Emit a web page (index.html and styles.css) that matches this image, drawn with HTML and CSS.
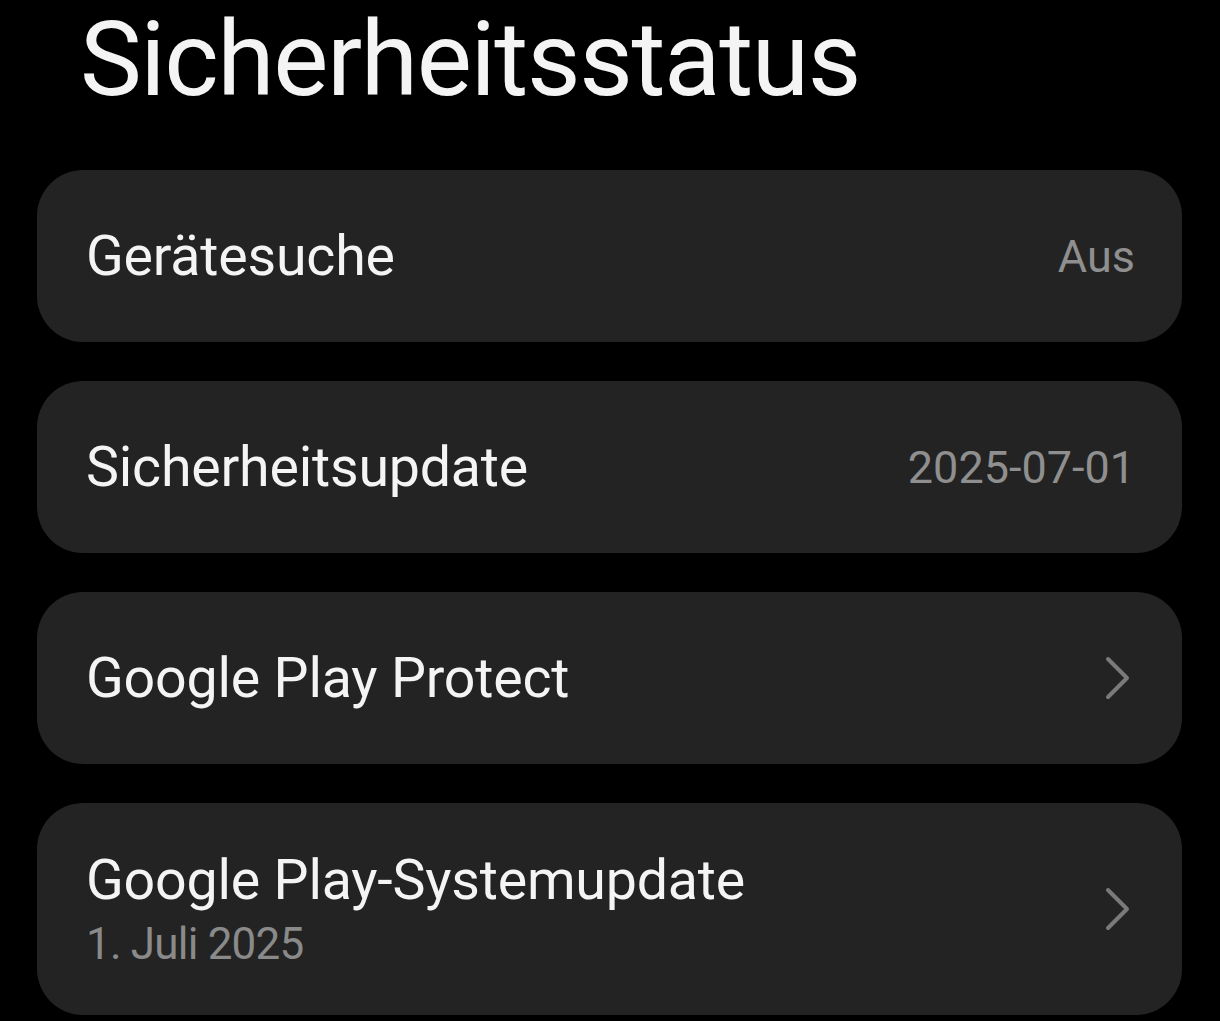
FILE: index.html
```html
<!DOCTYPE html>
<html lang="de">
<head>
  <meta charset="UTF-8">
  <title>Sicherheitsstatus</title>
  <link rel="stylesheet" href="styles.css">
</head>
<body>

  <h1 class="title">Sicherheitsstatus</h1>

  <div class="list">
    <div class="card">
      <span class="label">Gerätesuche</span>
      <span class="value">Aus</span>
    </div>

    <div class="card">
      <span class="label">Sicherheitsupdate</span>
      <span class="value">2025-07-01</span>
    </div>

    <div class="card">
      <span class="label">Google Play Protect</span>
      <svg class="chevron" viewBox="0 0 26 44" width="26" height="44">
        <polyline points="3,3 22,22 3,41" />
      </svg>
    </div>

    <div class="card card-tall">
      <div class="texts">
        <span class="label">Google Play-Systemupdate</span>
        <span class="sub">1. Juli 2025</span>
      </div>
      <svg class="chevron" viewBox="0 0 26 44" width="26" height="44">
        <polyline points="3,3 22,22 3,41" />
      </svg>
    </div>
  </div>

</body>
</html>
```

FILE: styles.css
```css
body {
  margin: 0;
  background: #000;
  font-family: Roboto, "Noto Sans", sans-serif;
  color: #f2f2f2;
  overflow: hidden;
}

.title {
  margin: 0;
  padding: 4px 0 0 80px;
  height: 166px;
  font-size: 104px;
  font-weight: 400;
  letter-spacing: -1.4px;
  line-height: 112px;
  color: #f4f4f4;
}

.list {
  display: flex;
  flex-direction: column;
  gap: 39px;
  margin: 0 38px 0 37px;
}

.card {
  display: flex;
  align-items: center;
  justify-content: space-between;
  height: 172px;
  padding: 0 47px 0 49px;
  background: #232323;
  border-radius: 46px;
}

.card-tall {
  height: 212px;
}

.label {
  font-size: 55.5px;
  letter-spacing: -0.2px;
  color: #f4f4f4;
}

.value {
  font-size: 45px;
  color: #8f8f8f;
}

.texts {
  display: flex;
  flex-direction: column;
}

.sub {
  font-size: 44px;
  letter-spacing: -0.8px;
  color: #8a8a8a;
  margin-top: 5px;
}

.chevron {
  fill: none;
  stroke: #7a7a7a;
  stroke-width: 4;
  stroke-linecap: round;
  stroke-linejoin: round;
  margin-right: 4px;
}
```
